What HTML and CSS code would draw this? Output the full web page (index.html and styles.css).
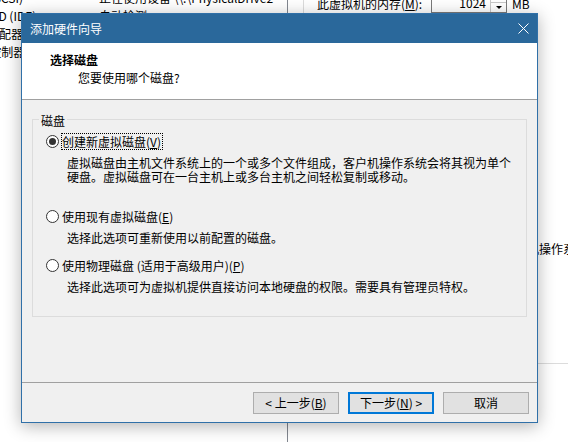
FILE: index.html
```html
<!DOCTYPE html>
<html lang="zh-CN">
<head>
    <meta charset="UTF-8">
    <meta name="viewport" content="width=device-width, initial-scale=1.0">
    <title>添加硬件向导</title>
    <link rel="stylesheet" href="styles.css">
</head>
<body>
    <!-- settings window behind the wizard -->
    <div class="settings">
        <div class="device-list">
            <div class="device-rows">
                <div class="device-row"><span class="device-name">硬盘 (SCSI)</span><span class="device-summary">正在使用设备 \\.\PhysicalDrive2</span></div>
                <div class="device-row"><span class="device-name">CD/DVD (IDE)</span><span class="device-summary">自动检测</span></div>
                <div class="device-row"><span class="device-name">网络适配器</span><span class="device-summary">NAT</span></div>
                <div class="device-row"><span class="device-name">USB 控制器</span><span class="device-summary">存在</span></div>
                <div class="device-row"><span class="device-name">声卡</span><span class="device-summary">自动检测</span></div>
                <div class="device-row"><span class="device-name">显示器</span><span class="device-summary">自动检测</span></div>
            </div>
        </div>
        <div class="device-pane">
            <div class="memory-group">
                <div class="memory-row">
                    <span class="memory-label">此虚拟机的内存(<u>M</u>):</span>
                    <div class="spin-box">
                        <span class="spin-value">1024</span>
                        <span class="spin-buttons"><span class="spin-up"></span><span class="spin-down"></span></span>
                    </div>
                    <span class="memory-unit">MB</span>
                </div>
                <div class="memory-scale">
                    <div class="scale-bar"></div>
                    <p class="scale-note">客户机操作系统推荐的最小内存</p>
                </div>
            </div>
        </div>
    </div>

    <div class="dialog">
        <div class="titlebar">
            <span class="title">添加硬件向导</span>
            <svg class="close" width="11" height="11" viewBox="0 0 11 11">
                <path d="M0.5 0.5L10.5 10.5M10.5 0.5L0.5 10.5" stroke="#fff" stroke-width="1" fill="none"/>
            </svg>
        </div>
        <div class="wizard-header">
            <h1>选择磁盘</h1>
            <p>您要使用哪个磁盘?</p>
        </div>
        <div class="wizard-body">
            <fieldset class="disk-group">
                <legend>磁盘</legend>
                <div class="option">
                    <div class="radio-row"><span class="radio checked"></span><span class="radio-text focused">创建新虚拟磁盘(<u>V</u>)</span></div>
                    <p class="option-desc">虚拟磁盘由主机文件系统上的一个或多个文件组成，客户机操作系统会将其视为单个<br>硬盘。虚拟磁盘可在一台主机上或多台主机之间轻松复制或移动。</p>
                </div>
                <div class="option option-second">
                    <div class="radio-row"><span class="radio"></span><span class="radio-text">使用现有虚拟磁盘(<u>E</u>)</span></div>
                    <p class="option-desc">选择此选项可重新使用以前配置的磁盘。</p>
                </div>
                <div class="option option-third">
                    <div class="radio-row"><span class="radio"></span><span class="radio-text">使用物理磁盘 (适用于高级用户)(<u>P</u>)</span></div>
                    <p class="option-desc">选择此选项可为虚拟机提供直接访问本地硬盘的权限。需要具有管理员特权。</p>
                </div>
            </fieldset>
        </div>
        <div class="wizard-buttons">
            <button>&lt; 上一步(<u>B</u>)</button>
            <button class="default">下一步(<u>N</u>) &gt;</button>
            <button>取消</button>
        </div>
    </div>
</body>
</html>
```

FILE: styles.css
```css
body {
    margin: 0;
    width: 568px;
    height: 442px;
    overflow: hidden;
    position: relative;
    background: #fff;
    color: #000;
    font-family: "Noto Sans CJK SC", "Microsoft YaHei", sans-serif;
    font-size: 12px;
    line-height: 14px;
}
p, h1 {
    margin: 0;
}

/* background settings window */
.settings {
    display: grid;
    grid-template-columns: 288px 1fr;
    height: 442px;
}
.device-list {
    border-right: 1px solid #828790;
    overflow: hidden;
}
.device-rows {
    margin-top: -11px;
}
.device-row {
    display: flex;
    align-items: center;
    height: 18px;
    white-space: nowrap;
}
.device-name {
    flex: none;
    width: 136px;
    margin-left: -37px;
}
.device-pane {
    padding-left: 15px;
    overflow: hidden;
}
.memory-group {
    box-sizing: border-box;
    height: 378px;
    margin-top: -14px;
    padding: 3px 0 0 13px;
    border: 1px solid #dcdcdc;
    border-right: none;
}
.memory-row {
    display: flex;
    align-items: flex-start;
    height: 23px;
}
.memory-label {
    width: 114px;
    padding-top: 7px;
    white-space: nowrap;
}
.spin-box {
    box-sizing: border-box;
    display: flex;
    width: 76px;
    height: 23px;
    border: 1px solid #7a7a7a;
    background: #fff;
}
.spin-value {
    flex: 1;
    text-align: right;
    padding: 5px 4px 0 0;
}
.spin-buttons {
    display: flex;
    flex-direction: column;
    width: 15px;
    border-left: 1px solid #c8c8c8;
}
.spin-up {
    height: 11px;
    border-bottom: 1px solid #c8c8c8;
}
.spin-down {
    flex: 1;
    display: flex;
    justify-content: center;
    align-items: center;
}
.spin-down::after {
    content: "";
    border-left: 3px solid transparent;
    border-right: 3px solid transparent;
    border-top: 3px solid #000;
}
.memory-unit {
    margin-left: 5px;
    padding-top: 7px;
}
.memory-scale {
    display: grid;
    grid-template-columns: 186px 1fr;
    margin-top: 229px;
}
.scale-note {
    white-space: nowrap;
}

/* wizard dialog */
.dialog {
    position: absolute;
    left: 21px;
    top: 13px;
    box-sizing: border-box;
    width: 517px;
    height: 410px;
    display: flex;
    flex-direction: column;
    border: 1px solid #3070a8;
    background: #f0f0f0;
    box-shadow: 0 3px 16px rgba(0, 0, 0, 0.3);
}
.titlebar {
    flex: none;
    display: flex;
    align-items: center;
    justify-content: space-between;
    height: 29px;
    padding: 0 8px;
    background: #2a689b;
    color: #fff;
}
.wizard-header {
    flex: none;
    height: 57px;
    padding-top: 8px;
    box-sizing: border-box;
    background: #fff;
    border-bottom: 1px solid #a0a0a0;
}
.wizard-header h1 {
    font-size: 12px;
    font-weight: bold;
    line-height: 18px;
    padding-left: 28px;
}
.wizard-header p {
    line-height: 18px;
    padding-left: 56px;
}
.wizard-body {
    flex: 1;
    padding: 10px 10px 0;
}
.disk-group {
    box-sizing: border-box;
    height: 207px;
    margin: 0;
    min-width: 0;
    padding: 5px 12px 0 13px;
    border: 1px solid #dcdcdc;
}
.disk-group legend {
    margin-left: -7px;
    padding: 4px 2px 0;
    line-height: 14px;
}
.radio-row {
    display: flex;
    align-items: center;
    height: 17px;
}
.radio {
    box-sizing: border-box;
    width: 13px;
    height: 13px;
    border: 1px solid #333;
    border-radius: 50%;
    background: #fff;
    display: flex;
    align-items: center;
    justify-content: center;
}
.radio.checked::after {
    content: "";
    width: 7px;
    height: 7px;
    border-radius: 50%;
    background: #333;
}
.radio-text {
    margin-left: 2px;
    padding: 0 1px 0 0;
    line-height: 15px;
    border: 1px dotted transparent;
    white-space: nowrap;
}
.radio-text.focused {
    border-color: #000;
}
.option-desc {
    margin-top: 6px;
    padding-left: 21px;
    white-space: nowrap;
}
.option-second {
    margin-top: 24px;
}
.option-third {
    margin-top: 12px;
}
.wizard-buttons {
    flex: none;
    box-sizing: border-box;
    height: 40px;
    display: flex;
    justify-content: flex-end;
    align-items: flex-start;
    gap: 9px;
    padding: 9px 8px 0 0;
    border-top: 1px solid #a0a0a0;
}
button {
    box-sizing: border-box;
    width: 86px;
    height: 22px;
    padding: 0;
    border: 1px solid #adadad;
    background: #e1e1e1;
    color: #000;
    font-family: inherit;
    font-size: 12px;
    line-height: 18px;
}
button.default {
    border: 2px solid #0078d7;
}
```
